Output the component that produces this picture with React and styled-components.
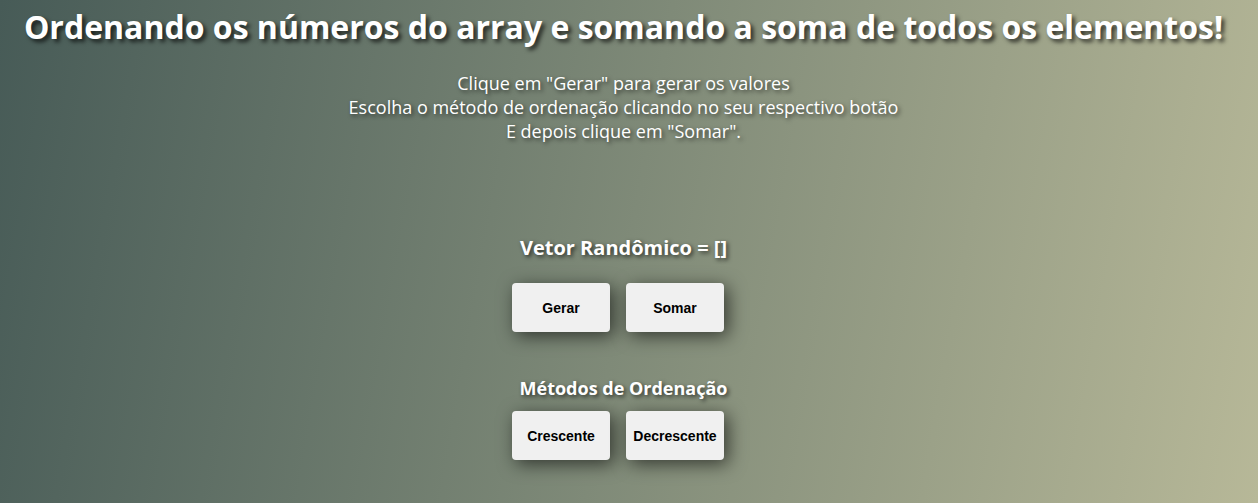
import styled, { createGlobalStyle } from "styled-components";

const GlobalStyle = createGlobalStyle`
  html, body {
    margin: 0;
    padding: 0;
  }
  body {
    min-height: 100vh;
    background: linear-gradient(100deg, #475b57 0%, #7f8a78 50%, #b7b898 100%);
    font-family: "Open Sans", "Liberation Sans", sans-serif;
    color: #fff;
  }
`;

const Page = styled.main`
  display: flex;
  flex-direction: column;
  align-items: center;
  min-height: 503px;
  padding-right: 11px;
  text-align: center;
`;

const Title = styled.h1`
  margin: 5px 0 0 0;
  font-size: 32px;
  line-height: 44px;
  font-weight: 700;
  text-shadow: 3px 3px 4px rgba(0, 0, 0, 0.7);
`;

const Instructions = styled.p`
  margin: 22px 0 0 0;
  font-size: 18px;
  line-height: 24px;
  text-shadow: 2px 2px 4px rgba(0, 0, 0, 0.6);
`;

const Section = styled.section`
  display: flex;
  flex-direction: column;
  align-items: center;
  margin-top: ${({ $top }) => $top}px;
`;

const Label = styled.h3`
  margin: 0;
  font-size: ${({ $size }) => $size}px;
  line-height: 24px;
  font-weight: 700;
  text-shadow: 2px 2px 4px rgba(0, 0, 0, 0.65);
`;

const ButtonRow = styled.div`
  display: flex;
  gap: 16px;
  padding-right: 11px;
  margin-top: ${({ $gap }) => $gap}px;
`;

const Button = styled.button`
  width: 98px;
  height: 49px;
  padding: 0;
  border: none;
  border-radius: 4px;
  background: #f0f0f0;
  color: #000;
  font-family: "Liberation Sans", Arial, sans-serif;
  font-size: 14px;
  font-weight: 700;
  box-shadow: 4px 4px 18px rgba(0, 0, 0, 0.6);
  cursor: pointer;
`;

export default function App() {
  return (
    <>
      <GlobalStyle />
      <Page>
        <Title>Ordenando os números do array e somando a soma de todos os elementos!</Title>
        <Instructions>
          Clique em "Gerar" para gerar os valores
          <br />
          Escolha o método de ordenação clicando no seu respectivo botão
          <br />
          E depois clique em "Somar".
        </Instructions>
        <Section $top={93}>
          <Label $size={20}>Vetor Randômico = []</Label>
          <ButtonRow $gap={23}>
            <Button>Gerar</Button>
            <Button>Somar</Button>
          </ButtonRow>
        </Section>
        <Section $top={44}>
          <Label $size={18}>Métodos de Ordenação</Label>
          <ButtonRow $gap={11}>
            <Button>Crescente</Button>
            <Button>Decrescente</Button>
          </ButtonRow>
        </Section>
      </Page>
    </>
  );
}
